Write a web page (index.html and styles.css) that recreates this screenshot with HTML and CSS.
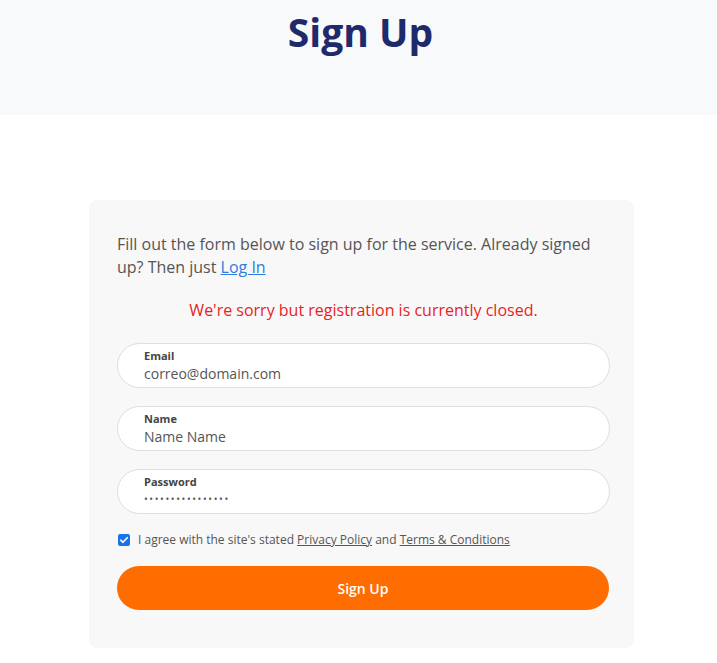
FILE: index.html
```html
<!DOCTYPE html>
<html>
<head>
<meta charset="utf-8">
<link rel="stylesheet" href="styles.css">
</head>
<body>
<header class="hero"><h1 class="title">Sign Up</h1></header>
<main class="main">
  <div class="card">
    <p class="intro">Fill out the form below to sign up for the service. Already signed up? Then just <a href="#" class="link">Log In</a></p>
    <p class="error">We're sorry but registration is currently closed.</p>
    <div class="field">
      <label class="label">Email</label>
      <div class="value">correo@domain.com</div>
    </div>
    <div class="field">
      <label class="label">Name</label>
      <div class="value">Name Name</div>
    </div>
    <div class="field">
      <label class="label">Password</label>
      <div class="value dots">••••••••••••••••</div>
    </div>
    <div class="agree">
      <span class="check"><svg width="10" height="10" viewBox="0 0 10 10"><path d="M1.8 5.2 L4 7.3 L8.3 2.7" fill="none" stroke="#fff" stroke-width="1.6" stroke-linecap="round" stroke-linejoin="round"/></svg></span>
      <span class="agree-text">I agree with the site's stated <a href="#" class="ulink">Privacy Policy</a> and <a href="#" class="ulink">Terms &amp; Conditions</a></span>
    </div>
    <button class="btn">Sign Up</button>
  </div>
</main>
</body>
</html>
```

FILE: styles.css
```css
* { box-sizing: border-box; }
html, body { margin: 0; padding: 0; background: #fff; }
body { font-family: "Open Sans", "Noto Sans", sans-serif; color: #555; }
.hero {
  height: 115px;
  background: #f8f9fa;
  display: flex;
  justify-content: center;
  padding-top: 6px;
}
.title {
  margin: 0;
  font-size: 39px;
  font-weight: 700;
  color: #1f2a6b;
  line-height: 52px;
  padding-left: 4px;
}
.main {
  padding: 85px 0 0 89px;
}
.card {
  width: 545px;
  height: 448px;
  background: #f8f8f8;
  border-radius: 8px;
  padding: 33px 24px 0 28px;
}
.intro {
  margin: 0;
  font-size: 16px;
  line-height: 23px;
  color: #555;
}
.link { color: #2f7de1; text-decoration: underline; }
.error {
  margin: 20px 0 0;
  text-align: center;
  color: #e8231f;
  font-size: 16px;
  line-height: 22px;
}
.field {
  margin-top: 22px;
  height: 45px;
  background: #fff;
  border: 1px solid #dedede;
  border-radius: 23px;
  padding: 5px 0 0 26px;
}
.field + .field { margin-top: 18px; }
.label {
  display: block;
  font-size: 11px;
  font-weight: 700;
  color: #444;
  line-height: 14px;
}
.value {
  font-size: 14px;
  color: #555;
  line-height: 21px;
}
.value.dots { font-size: 10px; letter-spacing: 1.6px; line-height: 20px; }
.agree {
  margin-top: 18px;
  display: flex;
  align-items: center;
  gap: 8px;
  padding-left: 1px;
}
.check {
  width: 12px;
  height: 12px;
  border-radius: 2px;
  background: #1a73e8;
  display: flex;
  align-items: center;
  justify-content: center;
}
.agree-text { font-size: 12px; color: #555; line-height: 16px; }
.ulink { color: #555; text-decoration: underline; }
.btn {
  display: block;
  margin-top: 18px;
  width: 492px;
  height: 44px;
  border: none;
  border-radius: 22px;
  background: #ff6d00;
  color: #fff;
  font-family: "Open Sans", sans-serif;
  font-size: 14px;
  font-weight: 600;
}
```
